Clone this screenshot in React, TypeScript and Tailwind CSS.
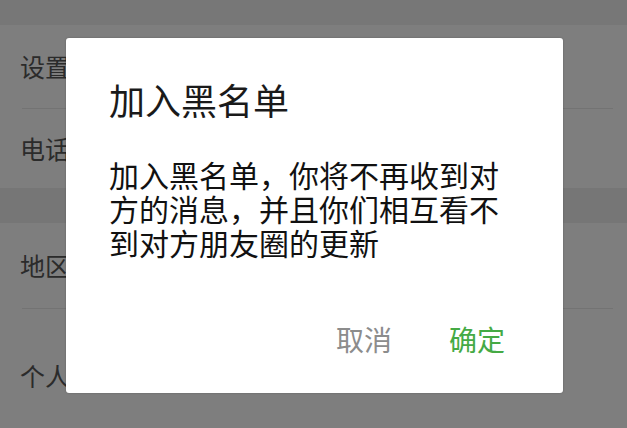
const rows = [
  { label: "设置", height: "h-[83px]" },
  { label: "电话", height: "h-[79px]" },
];

const rowsAfterGap = [
  { label: "地区", height: "h-[85px]" },
  { label: "个人", height: "h-[133px]" },
];

function Row({ label, height, divider }: { label: string; height: string; divider: boolean }) {
  return (
    <>
      <div className={`${height} flex items-center pl-[20px] text-[25px] text-[#2b2b2b]`}>{label}</div>
      {divider && <div className="h-px ml-[22px] mr-[14px] bg-[#737373]" />}
    </>
  );
}

export default function App() {
  return (
    <div className="relative w-[627px] h-[428px] overflow-hidden bg-[#7e7e7e] font-['Noto_Sans_CJK_SC','Noto_Sans',sans-serif]">
      {/* settings list, dimmed behind the dialog */}
      <div className="flex flex-col">
        <div className="h-[25px] bg-[#777777]" />
        {rows.map((r, i) => (
          <Row key={r.label} label={r.label} height={r.height} divider={i === 0} />
        ))}
        <div className="h-[35px] bg-[#767676]" />
        {rowsAfterGap.map((r, i) => (
          <Row key={r.label} label={r.label} height={r.height} divider={i === 0} />
        ))}
      </div>

      {/* confirm dialog */}
      <div className="absolute left-[66px] top-[38px] w-[497px] h-[355px] bg-white rounded-[3px] shadow-[0_0_2px_rgba(0,0,0,0.25)] flex flex-col pl-[43px]">
        <div className="mt-[43px] text-[36px] leading-[36px] text-[#1a1a1a]">加入黑名单</div>
        <div className="mt-[40px] w-[400px] text-[30px] leading-[34px] text-[#111111]">
          加入黑名单，你将不再收到对方的消息，并且你们相互看不到对方朋友圈的更新
        </div>
        <div className="mt-[66px] flex justify-end gap-[57px] pr-[58px] text-[28px] leading-[28px]">
          <button className="text-[#8c8c8c]">取消</button>
          <button className="text-[#45aa45]">确定</button>
        </div>
      </div>
    </div>
  );
}
